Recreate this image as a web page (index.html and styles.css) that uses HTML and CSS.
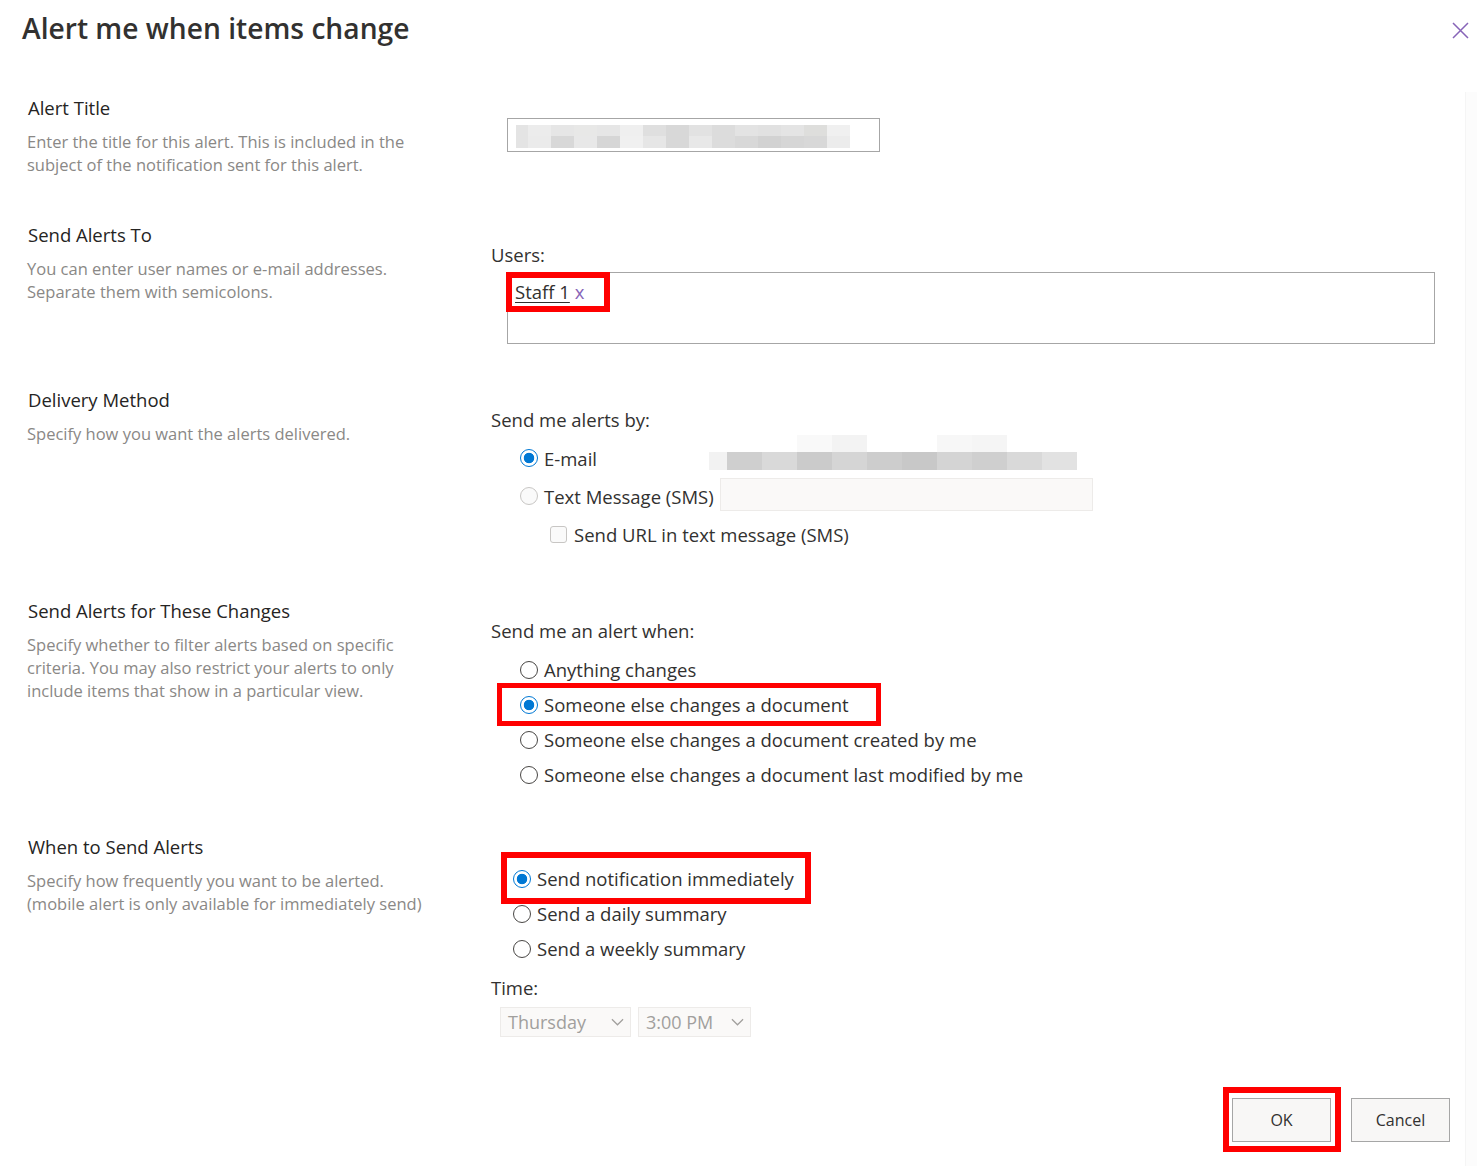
FILE: index.html
```html
<!DOCTYPE html>
<html lang="en">
<head>
<meta charset="utf-8">
<title>Alert me when items change</title>
<link rel="stylesheet" href="styles.css">
</head>
<body>
<div class="header">
  <h1 class="title">Alert me when items change</h1>
  <svg class="close" viewBox="0 0 17 17" aria-label="Close"><path d="M1 1L16 16M16 1L1 16" stroke="#8764b8" stroke-width="1.5" fill="none"/></svg>
</div>
<div class="body">
  <div class="content">
    <section class="section pb-47">
      <div class="info">
        <h2>Alert Title</h2>
        <p>Enter the title for this alert. This is included in the<br>subject of the notification sent for this alert.</p>
      </div>
      <div class="field pt-22">
        <div class="textbox"><div class="blur-title"></div></div>
      </div>
    </section>

    <section class="section pb-44">
      <div class="info">
        <h2>Send Alerts To</h2>
        <p>You can enter user names or e-mail addresses.<br>Separate them with semicolons.</p>
      </div>
      <div class="field">
        <div class="label">Users:</div>
        <div class="users"><span class="chip"><span class="user">Staff 1</span> <span class="remove">x</span></span></div>
      </div>
    </section>

    <section class="section pb-46">
      <div class="info">
        <h2>Delivery Method</h2>
        <p>Specify how you want the alerts delivered.</p>
      </div>
      <div class="field">
        <div class="label">Send me alerts by:</div>
        <div class="opts opts-delivery">
          <div class="opt opt-38">
            <span class="opt-main"><span class="radio on"></span><span class="opt-text">E-mail</span></span>
            <span class="blur-email"></span>
          </div>
          <div class="opt opt-38">
            <span class="radio off"></span><span class="opt-text">Text Message (SMS)</span>
            <span class="sms-input"></span>
          </div>
          <div class="opt opt-38 opt-check">
            <span class="check"></span><span class="opt-text">Send URL in text message (SMS)</span>
          </div>
        </div>
      </div>
    </section>

    <section class="section pb-43">
      <div class="info">
        <h2>Send Alerts for These Changes</h2>
        <p>Specify whether to filter alerts based on specific<br>criteria. You may also restrict your alerts to only<br>include items that show in a particular view.</p>
      </div>
      <div class="field">
        <div class="label">Send me an alert when:</div>
        <div class="opts opts-changes">
          <div class="opt"><span class="radio"></span><span class="opt-text">Anything changes</span></div>
          <div class="opt hl hl-doc"><span class="radio on"></span><span class="opt-text">Someone else changes a document</span></div>
          <div class="opt"><span class="radio"></span><span class="opt-text">Someone else changes a document created by me</span></div>
          <div class="opt"><span class="radio"></span><span class="opt-text">Someone else changes a document last modified by me</span></div>
        </div>
      </div>
    </section>

    <section class="section">
      <div class="info">
        <h2>When to Send Alerts</h2>
        <p>Specify how frequently you want to be alerted.<br>(mobile alert is only available for immediately send)</p>
      </div>
      <div class="field pt-when">
        <div class="opts opts-when">
          <div class="opt hl hl-now"><span class="radio on"></span><span class="opt-text">Send notification immediately</span></div>
          <div class="opt"><span class="radio"></span><span class="opt-text">Send a daily summary</span></div>
          <div class="opt"><span class="radio"></span><span class="opt-text">Send a weekly summary</span></div>
        </div>
        <div class="label time-label">Time:</div>
        <div class="selects">
          <div class="select sel-day"><span>Thursday</span><svg class="chev" viewBox="0 0 14 8"><path d="M1 1l6 6 6-6" fill="none" stroke="#a19f9d" stroke-width="1.3"/></svg></div>
          <div class="select sel-time"><span>3:00 PM</span><svg class="chev" viewBox="0 0 14 8"><path d="M1 1l6 6 6-6" fill="none" stroke="#a19f9d" stroke-width="1.3"/></svg></div>
        </div>
      </div>
    </section>

    <div class="footer">
      <button class="btn hl hl-ok" type="button">OK</button>
      <button class="btn" type="button">Cancel</button>
    </div>
  </div>
  <div class="track"></div>
</div>
</body>
</html>
```
FILE: styles.css
```css
* { box-sizing: border-box; }

body {
  margin: 0;
  background: #fff;
  color: #323130;
  font-family: "Segoe UI", "Open Sans", "Noto Sans", sans-serif;
}

.header {
  display: flex;
  justify-content: space-between;
  align-items: flex-start;
  padding: 10px 13px 0 22px;
}

.title {
  margin: 0;
  font-size: 28.2px;
  font-weight: 600;
  line-height: 36px;
  color: #323130;
}

.close {
  width: 17px;
  height: 17px;
  margin-top: 12px;
}

.body {
  display: flex;
  margin-top: 46px;
}

.content {
  flex: 1;
  padding: 4px 15px 0 0;
}

.track {
  width: 12px;
  margin-right: 5px;
  background: #fcfcfc;
  border-left: 1px solid #f5f5f5;
}

.section {
  display: grid;
  grid-template-columns: 491px 1fr;
}

.pb-47 { padding-bottom: 47px; }
.pb-44 { padding-bottom: 44px; }
.pb-46 { padding-bottom: 46px; }
.pb-43 { padding-bottom: 43px; }

.info { padding-left: 28px; }

.info h2 {
  margin: 0;
  font-size: 18.5px;
  font-weight: 400;
  line-height: 24px;
  color: #252423;
}

.info p {
  margin: 10px 0 0 -1px;
  font-size: 16.5px;
  line-height: 23px;
  color: #8a8886;
  white-space: nowrap;
}

.field { padding-top: 20px; }
.pt-22 { padding-top: 22px; }
.pt-when { padding-top: 26px; }

.label {
  font-size: 18.5px;
  line-height: 24px;
  color: #323130;
}

.textbox {
  margin-left: 16px;
  width: 373px;
  height: 34px;
  border: 1px solid #a6a6a6;
  padding: 6px 0 0 8px;
}

.blur-title {
  width: 334px;
  height: 23px;
  background-image:
    linear-gradient(to right,
      #e4e4e4 0 12px, #ececec 12px 35px, #e6e6e6 35px 58px, #e8e8e7 58px 81px,
      #e6e6e6 81px 104px, #efefef 104px 127px, #dfdfdf 127px 150px, #d8d8d8 150px 173px,
      #e2e2e2 173px 196px, #dcdcdc 196px 219px, #e3e3e3 219px 242px, #e1e1e1 242px 265px,
      #e4e4e4 265px 288px, #dededc 288px 311px, #f0f0f0 311px 334px),
    linear-gradient(to right,
      #e4e4e4 0 12px, #ebebeb 12px 35px, #d8d8d8 35px 58px, #e8e8e8 58px 81px,
      #d6d6d6 81px 104px, #f0f0f0 104px 127px, #e6e6e6 127px 150px, #d8d8d8 150px 173px,
      #e8e8e8 173px 196px, #dcdcdc 196px 219px, #d8d8d8 219px 242px, #d2d2d2 242px 265px,
      #d6d6d6 265px 288px, #d8d8d8 288px 311px, #ececec 311px 334px);
  background-size: 100% 11px, 100% 12px;
  background-position: top left, bottom left;
  background-repeat: no-repeat;
}

.users {
  margin: 5px 0 0 16px;
  width: 928px;
  height: 72px;
  border: 1px solid #a6a6a6;
}

.chip {
  display: inline-block;
  margin: -1px 0 0 -2px;
  height: 40px;
  padding: 0 20px 0 3px;
  border: 6px solid #ff0000;
  font-size: 18.5px;
  line-height: 28px;
}

.user {
  color: #323130;
  text-decoration: underline;
  text-underline-offset: 3px;
}

.remove { color: #8764b8; }

.opts-delivery { margin-top: 7px; padding-left: 29px; }
.opts-changes { margin-top: 9px; padding-left: 29px; }
.opts-when { padding-left: 22px; }

.opt {
  display: flex;
  align-items: center;
  gap: 6px;
  height: 35px;
  width: fit-content;
  font-size: 18.5px;
  color: #323130;
}

.opt-38 { height: 38px; }

.opt-main {
  display: flex;
  align-items: center;
  gap: 6px;
  width: 183px;
}

.opt-check { padding-left: 30px; gap: 7px; }

.radio {
  flex: none;
  width: 18px;
  height: 18px;
  border-radius: 50%;
  border: 1px solid #484644;
  background: #fff;
}

.radio.on {
  border: 1.6px solid #0078d4;
  background: radial-gradient(circle, #0078d4 0 4.9px, #fff 5.6px);
}

.radio.off {
  border-color: #c8c6c4;
  background: #fafafa;
}

.check {
  flex: none;
  width: 17px;
  height: 17px;
  border: 1px solid #c8c6c4;
  border-radius: 3px;
  background: #fafafa;
}

.blur-email {
  width: 368px;
  height: 35px;
  margin-top: -12px;
  background-image:
    linear-gradient(to right,
      transparent 0 88px, #f9f9f9 88px 123px, #f3f3f3 123px 158px,
      transparent 158px 228px, #f7f7f7 228px 263px, #f5f5f5 263px 298px, transparent 298px),
    linear-gradient(to right,
      #f2f2f2 0 18px, #cfcfcf 18px 53px, #d9d9d9 53px 88px, #cbcbcb 88px 123px,
      #d5d5d5 123px 158px, #cdcdcd 158px 193px, #c8c8c8 193px 228px, #d4d4d4 228px 263px,
      #cfcfcf 263px 298px, #d9d9d9 298px 333px, #e2e2e2 333px 368px);
  background-size: 100% 17px, 100% 18px;
  background-position: top left, bottom left;
  background-repeat: no-repeat;
}

.sms-input {
  width: 373px;
  height: 33px;
  margin-top: -4px;
  background: #faf9f8;
  border: 1px solid #edebe9;
}

.hl { position: relative; }

.hl::after {
  content: "";
  position: absolute;
  border: 5px solid #ff0000;
  pointer-events: none;
}

.hl-doc::after { left: -23px; right: -32px; top: -4px; bottom: -4px; }
.hl-now::after { left: -12px; right: -17px; top: -9px; bottom: -8px; border-width: 6px; }
.hl-ok::after { left: -10px; right: -11px; top: -12px; bottom: -11px; border-width: 6px; }

.time-label { margin-top: 10px; }

.selects {
  display: flex;
  gap: 7px;
  margin-top: 7px;
  padding-left: 9px;
}

.select {
  display: flex;
  align-items: center;
  justify-content: space-between;
  height: 30px;
  padding: 0 6px 0 7px;
  background: #faf9f8;
  border: 1px solid #edebe9;
  font-size: 18px;
  color: #a19f9d;
}

.sel-day { width: 131px; }
.sel-time { width: 113px; }

.chev { width: 13px; height: 8px; }

.footer {
  display: flex;
  justify-content: flex-end;
  gap: 20px;
  margin-top: 61px;
  padding-bottom: 26px;
}

.btn {
  width: 99px;
  height: 44px;
  padding: 0;
  background: #f8f7f6;
  border: 1px solid #a6a6a6;
  border-radius: 0;
  font-family: inherit;
  font-size: 16px;
  color: #323130;
}
```
